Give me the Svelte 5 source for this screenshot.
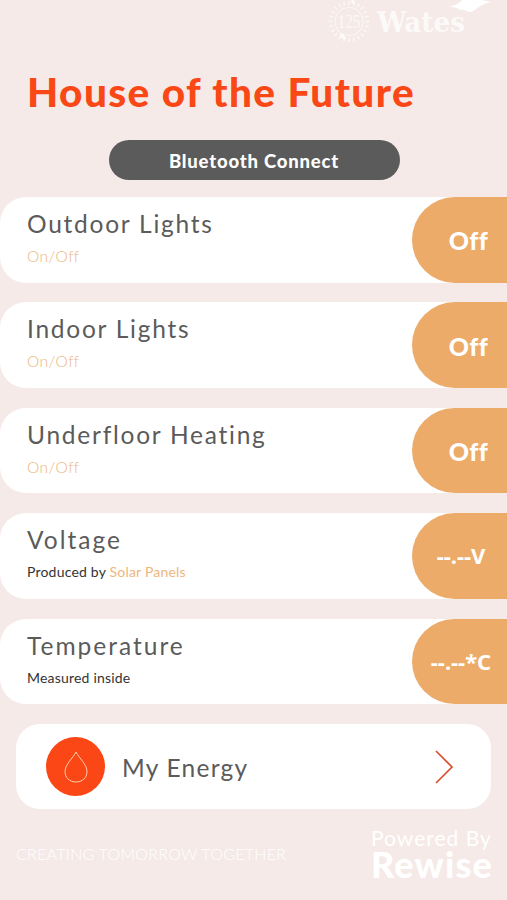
<script>
    const rows = [
        { title: 'Outdoor Lights', note: '', accent: 'On/Off', value: 'Off', kind: 'outdoor' },
        { title: 'Indoor Lights', note: '', accent: 'On/Off', value: 'Off', kind: 'indoor' },
        { title: 'Underfloor Heating', note: '', accent: 'On/Off', value: 'Off', kind: 'heating' },
        { title: 'Voltage', note: 'Produced by', accent: 'Solar Panels', value: '--.--V', kind: 'voltage' },
        { title: 'Temperature', note: 'Measured inside', accent: '', value: '--.--*C', kind: 'temperature' },
    ];

    const rays = Array.from({ length: 24 }, (_, i) => i * 360 / 24);
</script>

<div class="app">
    <header>
        <svg class="brand" width="179" height="48" viewBox="328 0 179 48">
            <g fill="none" stroke="#fff" opacity=".6">
                <circle cx="349" cy="21.5" r="14" stroke-width="1.2" />
                {#each rays as angle}
                    <path d="M349 5v-4" stroke-width="1.7" transform="rotate({angle} 349 21.5)" />
                {/each}
            </g>
            <path d="M340 34q4-1 6 5-5 1-6-5zM350 2l3-3 2 5z" fill="#fff" opacity=".8" />
            <text class="years" x="337.5" y="28" textLength="23" lengthAdjust="spacingAndGlyphs">125</text>
            <text class="name" x="377" y="32" textLength="88" lengthAdjust="spacingAndGlyphs">Wates</text>
            <path d="M449 7Q458 5 462 0H481L491 2Q482 4 476 9Q471 14 467 11Q463 9 460 10Q458 7 449 7Z" fill="#fff" />
        </svg>
        <h1>House of the Future</h1>
        <button class="connect">Bluetooth Connect</button>
    </header>

    <main>
        {#each rows as row}
            <section class="row">
                <div class="label">
                    <h2 class={row.kind}>{row.title}</h2>
                    <p class:plain={row.note}>{row.note} <span>{row.accent}</span></p>
                </div>
                <div class="value {row.kind}"><span>{row.value}</span></div>
            </section>
        {/each}

        <section class="energy">
            <div class="drop">
                <svg width="26" height="34" viewBox="0 0 26 34">
                    <path d="M13 2C10 8 2 14.5 2 21.5C2 28 7 32 13 32S24 28 24 21.5C24 14.5 16 8 13 2Z" />
                </svg>
            </div>
            <h2>My Energy</h2>
            <svg class="chevron" width="20" height="36" viewBox="0 0 20 36">
                <path d="M2 2L18 18L2 34" />
            </svg>
        </section>
    </main>

    <footer>
        <p class="slogan">CREATING TOMORROW TOGETHER</p>
        <div class="powered">
            <span>Powered By</span>
            <strong>Rewise</strong>
        </div>
    </footer>
</div>

<style>
    :global(body) {
        background: #f5eae7;
    }
    .app {
        width: 507px;
        height: 900px;
        overflow: hidden;
        background: #f5eae7;
        font-family: Lato, sans-serif;
        color: #5b5b5b;
    }
    h1, h2, p {
        margin: 0;
        white-space: nowrap;
    }
    header {
        height: 197px;
        display: flex;
        flex-direction: column;
    }
    .brand {
        align-self: flex-end;
    }
    .years {
        font: 19px "Liberation Serif", serif;
        fill: #fff;
        opacity: .7;
    }
    .name {
        font: bold 28px "DejaVu Serif", serif;
        fill: #fff;
        opacity: .75;
    }
    h1 {
        margin: 20px 0 0 27px;
        height: 48px;
        line-height: 48px;
        font-size: 40.5px;
        font-weight: 900;
        letter-spacing: 1.4px;
        color: #f94816;
    }
    .connect {
        align-self: center;
        margin: 24px 0 0 1px;
        width: 291px;
        height: 40px;
        padding: 2px 0 0;
        border: none;
        border-radius: 20px;
        background: #5b5b5b;
        color: #fff;
        font: 900 18.5px Lato, sans-serif;
        letter-spacing: .8px;
    }
    main {
        display: flex;
        flex-direction: column;
        gap: 19.9px;
    }
    .row {
        display: flex;
        justify-content: space-between;
        height: 85.5px;
        border-radius: 26px 0 0 26px;
        background: #fff;
    }
    .label {
        padding: 11px 0 0 27px;
    }
    h2 {
        height: 32px;
        line-height: 32px;
        font-size: 24.5px;
        font-weight: 400;
        letter-spacing: 1.75px;
    }
    h2.temperature, h2.voltage {
        letter-spacing: 2px;
    }
    .label p {
        margin-top: 6px;
        height: 20px;
        line-height: 20px;
        font-size: 15.5px;
        font-weight: 300;
        letter-spacing: .4px;
        color: #edab69;
    }
    .label p.plain {
        font-weight: 400;
        font-size: 14px;
        letter-spacing: .2px;
        color: #333;
    }
    .label p span {
        color: #edb67e;
    }
    .value {
        display: flex;
        align-items: center;
        justify-content: center;
        width: 95px;
        box-sizing: border-box;
        padding: 1px 0 0 18px;
        border-radius: 43px 0 0 43px;
        background: #edab69;
        color: #fff;
        font-size: 25px;
        font-weight: 900;
        letter-spacing: .5px;
        white-space: nowrap;
    }
    .value.voltage, .value.temperature {
        padding: 0 0 1px 3px;
        font-family: "Noto Sans", sans-serif;
        font-size: 22px;
        font-weight: 700;
        letter-spacing: 0;
    }
    .energy {
        display: flex;
        align-items: center;
        height: 85.5px;
        margin: 0 16px;
        padding: 0 37px 0 30px;
        box-sizing: border-box;
        border-radius: 24px;
        background: #fff;
    }
    .energy h2 {
        margin: 2px 0 0 17px;
        letter-spacing: 1.25px;
    }
    .drop {
        display: flex;
        align-items: center;
        justify-content: center;
        width: 59px;
        height: 59px;
        border-radius: 50%;
        background: #fa4715;
    }
    .drop path {
        fill: none;
        stroke: #ffd0b0;
        stroke-width: 1;
    }
    .chevron {
        margin-left: auto;
    }
    .chevron path {
        fill: none;
        stroke: #d94d30;
        stroke-width: 1.7;
    }
    footer {
        display: flex;
        justify-content: space-between;
        padding: 16px 16px 0;
        color: #fff;
    }
    .slogan {
        margin-top: 19px;
        line-height: 20px;
        font-size: 16px;
        font-weight: 300;
        letter-spacing: .27px;
    }
    .powered {
        display: flex;
        flex-direction: column;
        width: 120px;
        white-space: nowrap;
    }
    .powered span {
        line-height: 25px;
        font-size: 21px;
        letter-spacing: 1px;
    }
    .powered strong {
        line-height: 28px;
        font-size: 36px;
        font-weight: 900;
        letter-spacing: 1.2px;
    }
</style>
